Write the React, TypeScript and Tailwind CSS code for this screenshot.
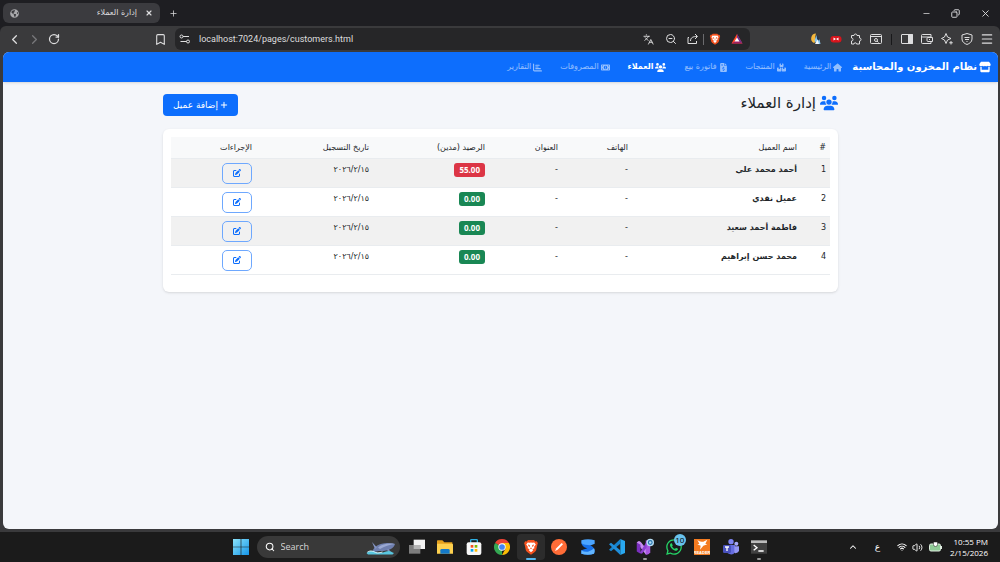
import type { ComponentType, ReactNode } from 'react'
import clsx from 'clsx'
import {
  Bookmark,
  ChevronLeft,
  ChevronRight,
  ChevronUp,
  Copy,
  Languages,
  Menu,
  Minus,
  Plus,
  RotateCw,
  Search,
  Volume2,
  Wifi,
  X,
  ZoomOut,
} from 'lucide-react'
import { FaGlobeAmericas, FaWhatsapp } from 'react-icons/fa'
import {
  FaBoxesStacked,
  FaChartBar,
  FaFileInvoiceDollar,
  FaHouse,
  FaMoneyBill1,
  FaPenToSquare,
  FaPlus,
  FaStore,
  FaUsers,
} from 'react-icons/fa6'

interface NavItem {
  label: string
  icon: ComponentType<{ className?: string }>
  active?: boolean
}

interface Customer {
  id: number
  name: string
  balance: number
  date: string
}

const NAV: NavItem[] = [
  { label: 'الرئيسية', icon: FaHouse },
  { label: 'المنتجات', icon: FaBoxesStacked },
  { label: 'فاتورة بيع', icon: FaFileInvoiceDollar },
  { label: 'العملاء', icon: FaUsers, active: true },
  { label: 'المصروفات', icon: FaMoneyBill1 },
  { label: 'التقارير', icon: FaChartBar },
]

const CUSTOMERS: Customer[] = [
  { id: 1, name: 'أحمد محمد علي', balance: 55, date: '٢٠٢٦/٢/١٥' },
  { id: 2, name: 'عميل نقدي', balance: 0, date: '٢٠٢٦/٢/١٥' },
  { id: 3, name: 'فاطمة أحمد سعيد', balance: 0, date: '٢٠٢٦/٢/١٥' },
  { id: 4, name: 'محمد حسن إبراهيم', balance: 0, date: '٢٠٢٦/٢/١٥' },
]

const COLUMNS = [
  { label: '#', width: 'w-[29px]' },
  { label: 'اسم العميل', width: 'w-[169px]' },
  { label: 'الهاتف', width: 'w-[70px]' },
  { label: 'العنوان', width: 'w-[73px]' },
  { label: 'الرصيد (مدين)', width: 'w-[116px]' },
  { label: 'تاريخ التسجيل', width: 'w-[117px]' },
  { label: 'الإجراءات', width: 'w-auto' },
]

function BraveLogo({ className }: { className?: string }) {
  return (
    <svg viewBox="0 0 24 24" className={className} aria-hidden="true">
      <path d="M7.5 1.5h9l2 2.2 2.3-.4 1.5 3-.7 1.9-1.8 8.3c-.5 1.7-1.4 2.6-2.7 3.5L12 23.5 6.9 20c-1.3-.9-2.2-1.8-2.7-3.5L2.4 8.2l-.7-1.9 1.5-3 2.3.4z" fill="#f4511e" />
      <path d="m12 5.2 2 .5 2.800-.6 2.400 3.200-2.500 3.400.4 2-3 1.800 1.200 1.500L12 20l-3.300-3 1.200-1.500-3-1.800.4-2-2.500-3.400 2.400-3.200 2.800.6z" fill="#fff" />
      <path d="m7.200 8.200 2.800.7.6 3-2-.9zm9.600 0-2.800.7-.6 3 2-.9zM12 12.600l1.400 1.200-1.400 1.400-1.400-1.400z" fill="#f4511e" />
    </svg>
  )
}

function ToolButton({ label, children }: { label: string; children: ReactNode }) {
  return (
    <button type="button" aria-label={label} className="flex h-5 w-5 items-center justify-center">
      {children}
    </button>
  )
}

function ExtensionIcons() {
  return (
    <>
      <ToolButton label="Weather extension">
        <svg viewBox="0 0 24 24" className="size-3">
          <path d="M12 1A10 10 0 0 0 8 20C12 20 9 8 12 1z" fill="#f5b83d" />
          <path d="M13 4 9 15l4 7h8l-2-9-3 2z" fill="#87c5ee" />
          <path d="m15 13 3 9h-8z" fill="#f4f7fa" />
          <path d="m13 4 4 5 1 6-4-3z" fill="#24344c" />
        </svg>
      </ToolButton>
      <ToolButton label="Video extension">
        <svg viewBox="0 0 24 24" className="size-3">
          <rect x="1" y="6" width="22" height="13" rx="6" fill="#d8141c" />
          <path d="m7 9 5 3-5 3zm10 0-5 3 5 3z" fill="#fff" />
        </svg>
      </ToolButton>
      <ToolButton label="Extensions">
        <svg viewBox="0 0 24 24" className="size-3" fill="none" stroke="currentColor" strokeWidth="2" strokeLinejoin="round">
          <path d="M3 5h5a3 3 0 1 1 6 0h5v5a3 3 0 1 1 0 6v6h-6a2.500 2.500 0 0 0-5 0H3v-6a3 3 0 0 0 0-6z" />
        </svg>
      </ToolButton>
      <ToolButton label="Search tabs">
        <svg viewBox="0 0 24 24" className="size-3" fill="none" stroke="currentColor" strokeWidth="2">
          <rect x="1" y="3" width="22" height="18" rx="2" />
          <path d="M1 7h22M14 16l3 3" />
          <circle cx="12" cy="14" r="3" />
        </svg>
      </ToolButton>
    </>
  )
}

function TitleBar() {
  return (
    <div className="flex h-[26px] items-center bg-[#1e1e22] pl-[3px] text-[#dcdcde]">
      <div className="flex h-5 w-[157px] items-center gap-2 rounded-md bg-[#3b3b3f] px-[7px]">
        <FaGlobeAmericas className="size-[9px] text-[#a9a9ac]" />
        <span dir="rtl" className="flex-1 font-['DejaVu_Sans',sans-serif] text-[8px]">إدارة العملاء</span>
        <button type="button" aria-label="Close tab"><X className="size-2" strokeWidth={3.5} /></button>
      </div>
      <button type="button" aria-label="New tab" className="ml-2 p-px"><Plus className="size-[9px]" strokeWidth={2} /></button>
      <div className="ml-auto flex items-center gap-5 pr-[9px]">
        <button type="button" aria-label="Minimize"><Minus className="size-[9px]" /></button>
        <button type="button" aria-label="Restore"><Copy className="size-[9px] -scale-x-100" strokeWidth={2.5} /></button>
        <button type="button" aria-label="Close"><X className="size-[11px]" /></button>
      </div>
    </div>
  )
}

function Toolbar() {
  return (
    <div className="flex h-[26px] items-center rounded-t-md bg-[#3a3a3c] pl-1 pr-[3px] text-[#dededf]">
      <ToolButton label="Back"><ChevronLeft className="size-[15px]" /></ToolButton>
      <ToolButton label="Forward"><ChevronRight className="size-[15px] text-[#78787b]" /></ToolButton>
      <ToolButton label="Reload"><RotateCw className="size-3" strokeWidth={2.5} /></ToolButton>
      <div className="ml-auto flex w-[600px] items-center gap-[5px]">
        <ToolButton label="Bookmark"><Bookmark className="size-[13px]" /></ToolButton>
        <div className="flex h-[22px] flex-1 items-center rounded-md bg-[#262628] pl-1 pr-[3px]">
          <svg viewBox="0 0 24 24" className="size-3" fill="none" stroke="currentColor" strokeWidth="2">
            <circle cx="5" cy="7" r="3" />
            <circle cx="18" cy="17" r="3" />
            <path d="M8 7h12M3 17h12" />
          </svg>
          <input
            aria-label="Address"
            defaultValue="localhost:7024/pages/customers.html"
            className="ml-2 mt-0.5 min-w-0 flex-1 bg-transparent font-['Roboto',sans-serif] text-[9px] outline-none"
          />
          <ToolButton label="Translate"><Languages className="size-[11px]" /></ToolButton>
          <span className="w-[3px]" />
          <ToolButton label="Zoom"><ZoomOut className="size-3" /></ToolButton>
          <span className="w-0.5" />
          <ToolButton label="Share">
            <svg viewBox="0 0 24 24" className="size-3" fill="none" stroke="currentColor" strokeWidth="2">
              <path d="M4 9H2v12h17v-5M7 16c0-7 5-9 13-9M16 2l5 5-5 5" />
            </svg>
          </ToolButton>
          <span className="h-[11px] w-px bg-[#6b6b6e]" />
          <span className="w-px" />
          <ToolButton label="Shields"><BraveLogo className="size-3" /></ToolButton>
          <span className="w-0.5" />
          <ToolButton label="Rewards">
            <svg viewBox="0 0 24 24" className="size-3">
              <path d="M12 2 1 21h22z" fill="#ff4724" />
              <path d="m1 21 11-7 11 7z" fill="#9e1f63" />
              <path d="m12 2 11 19-11-7z" fill="#662d91" />
              <path d="m12 9 5 8H7z" fill="#fff" />
            </svg>
          </ToolButton>
        </div>
      </div>
      <div className="ml-14 flex items-center">
        <ExtensionIcons />
        <span className="mx-[5px] h-[11px] w-px bg-[#18181a]" />
        <ToolButton label="Sidebar">
          <svg viewBox="0 0 24 24" className="size-3" fill="none" stroke="currentColor" strokeWidth="2">
            <rect x="1" y="3" width="22" height="18" rx="1" />
            <path d="M15 3h8v18h-8z" fill="currentColor" />
          </svg>
        </ToolButton>
        <ToolButton label="Wallet">
          <svg viewBox="0 0 24 24" className="size-3" fill="none" stroke="currentColor" strokeWidth="2" strokeLinejoin="round">
            <path d="M20 8V3H3a2 2 0 0 0-2 2v14q0 2 2 2h17v-4M1 6q0 2 2 2h17M14 9h9v8h-9q-2 0-2-2v-4q0-2 2-2zM16 13h2" />
          </svg>
        </ToolButton>
        <ToolButton label="Assistant">
          <svg viewBox="0 0 24 24" className="size-3" fill="none" stroke="currentColor" strokeWidth="2" strokeLinejoin="round">
            <path d="m10 1 3 7 7 3-7 3-3 7-3-7-6-3 6-3zM20 16v7M16.500 19.500h7" />
          </svg>
        </ToolButton>
        <ToolButton label="VPN">
          <svg viewBox="0 0 24 24" className="size-3" fill="none" stroke="currentColor" strokeWidth="2">
            <path d="M12 1 2 4v8c0 6 5 9 10 11 5-2 10-5 10-11V4z" />
            <path d="M7 9h10M8 13h8M11 17h2" />
          </svg>
        </ToolButton>
        <ToolButton label="Menu"><Menu className="size-[14px]" /></ToolButton>
      </div>
    </div>
  )
}

function SiteNav() {
  return (
    <nav className="flex h-[30px] items-center bg-[#0d6efd] px-[7px] text-white shadow-sm">
      <a href="#home" className="flex items-center gap-0.5 text-[10px] font-bold">
        <FaStore className="size-3" />
        نظام المخزون والمحاسبة
      </a>
      <div className="flex items-center gap-[18px] pr-[10px]">
        {NAV.map((item) => (
          <a
            key={item.label}
            href="#nav"
            className={clsx('flex items-center gap-0.5 text-[8px]', item.active ? 'font-bold text-white' : 'text-white/55')}
          >
            <item.icon className={item.active ? 'size-[11px]' : 'size-[9px]'} />
            {item.label}
          </a>
        ))}
      </div>
    </nav>
  )
}

function CustomersTable() {
  return (
    <table className="w-full table-fixed border-collapse text-right text-[8px] text-[#212529]">
      <thead>
        <tr className="h-[21px] border-b border-[#e9ecef] bg-[#f8f9fa]">
          {COLUMNS.map((col) => (
            <th key={col.label} scope="col" className={clsx('px-1 pt-0.5 font-normal', col.width)}>
              {col.label}
            </th>
          ))}
        </tr>
      </thead>
      <tbody>
        {CUSTOMERS.map((c) => (
          <tr key={c.id} className="border-b border-[#e9ecef] align-top odd:bg-[#f1f1f1]">
            <td className="px-1 pt-[5px]">{c.id}</td>
            <td className="px-1 pt-[5px] font-bold">{c.name}</td>
            <td className="px-1 pt-[5px]">-</td>
            <td className="px-1 pt-[5px]">-</td>
            <td className="px-1 pt-1">
              <span
                className={clsx(
                  'inline-block rounded-[3px] px-[5px] py-px font-["Noto_Sans",sans-serif] font-bold leading-3 text-white',
                  c.balance > 0 ? 'bg-[#dc3545]' : 'bg-[#198754]'
                )}
              >
                {c.balance.toFixed(2)}
              </span>
            </td>
            <td className="px-1 pt-[5px]">{c.date}</td>
            <td className="px-1 pb-[3px] pt-1">
              <button
                type="button"
                aria-label={`تعديل ${c.name}`}
                className="flex h-[21px] w-[30px] items-center justify-center rounded-[5px] border border-[#6ea8fe] text-[#0d6efd]"
              >
                <FaPenToSquare className="size-2" />
              </button>
            </td>
          </tr>
        ))}
      </tbody>
    </table>
  )
}

function CustomersPage() {
  return (
    <div dir="rtl" lang="ar" className="ml-[3px] mr-[2px] flex-1 overflow-hidden rounded-md bg-[#f4f6fa] font-['DejaVu_Sans',sans-serif] leading-3">
      <SiteNav />
      <main className="mx-auto max-w-[675px] pt-3">
        <div className="mb-[13px] flex items-center justify-between">
          <h1 className="flex items-center gap-1 pb-1 text-[15px] leading-[18px] text-[#212529]">
            <FaUsers className="size-[18px] text-[#0d6efd]" />
            إدارة العملاء
          </h1>
          <button type="button" className="flex h-[22px] items-center gap-0.5 rounded bg-[#0d6efd] px-[10px] text-[9px] text-white">
            <FaPlus className="size-2" />
            إضافة عميل
          </button>
        </div>
        <section className="rounded-md bg-white px-2 pb-[17px] pt-2 shadow-sm">
          <CustomersTable />
        </section>
      </main>
    </div>
  )
}

interface AppIconProps {
  label: string
  current?: boolean
  running?: boolean
  children: ReactNode
}

function AppIcon({ label, current, running, children }: AppIconProps) {
  return (
    <button
      type="button"
      aria-label={label}
      className={clsx('relative flex h-[26px] w-7 items-center justify-center rounded-sm', current && 'bg-[#2c2c2c]')}
    >
      {children}
      {(current || running) && (
        <span className={clsx('absolute bottom-0 h-0.5 rounded-full', current ? 'w-2.5 bg-[#55b8f0]' : 'w-1 bg-[#9a9a9a]')} />
      )}
    </button>
  )
}

function PinnedApps() {
  return (
    <div className="ml-[3px] flex w-[371px] items-center justify-between">
      <AppIcon label="Task view">
        <svg viewBox="0 0 24 24" className="size-4">
          <path d="M7 1h17v14H7z" fill="#f2f2f2" />
          <path d="M0 9h17v13H0z" fill="#7d7d7d" />
          <path d="M7 9h10v6H7z" fill="#b5b5b5" />
        </svg>
      </AppIcon>
      <AppIcon label="File Explorer">
        <svg viewBox="0 0 24 24" className="size-4">
          <path d="M0 3q0-1 1-1h7l3 3h12v6H0z" fill="#e5a11d" />
          <path d="M0 7h23q1 0 1 1v14H0z" fill="#fdd04f" />
          <path d="M5 22v-5q0-2 2-2h10q2 0 2 2v5z" fill="#1479c9" />
        </svg>
      </AppIcon>
      <AppIcon label="Microsoft Store">
        <svg viewBox="0 0 24 24" className="size-4">
          <path d="M7 6V2q0-1 1-1h8q1 0 1 1v4" fill="none" stroke="#2fb1e4" strokeWidth="2" />
          <rect x="1" y="5" width="22" height="19" rx="3" fill="#f7f7f7" />
          <path d="M7 9h4v4H7z" fill="#f25022" />
          <path d="M13 9h4v4h-4z" fill="#7fba00" />
          <path d="M7 15h4v4H7z" fill="#00a4ef" />
          <path d="M13 15h4v4h-4z" fill="#ffb900" />
        </svg>
      </AppIcon>
      <AppIcon label="Chrome">
        <svg viewBox="0 0 24 24" className="size-4">
          <path d="M12 12 1.600 6A12 12 0 0 1 22.400 6z" fill="#ea4335" />
          <path d="M12 12v12A12 12 0 0 1 1.600 6z" fill="#34a853" />
          <path d="M12 6h10.400A12 12 0 0 1 12 24l5-9z" fill="#fbbc05" />
          <circle cx="12" cy="12" r="5.500" fill="#fff" />
          <circle cx="12" cy="12" r="4.300" fill="#4285f4" />
        </svg>
      </AppIcon>
      <AppIcon label="Brave" current><BraveLogo className="size-4" /></AppIcon>
      <AppIcon label="Postman">
        <svg viewBox="0 0 24 24" className="size-4">
          <circle cx="12" cy="12" r="12" fill="#ff6c37" />
          <path d="m6 18 2-4 8-8 2 2-8 8z" fill="#fff" />
        </svg>
      </AppIcon>
      <AppIcon label="Database client">
        <svg viewBox="0 0 24 24" className="size-4">
          <path d="M2 2q10-3 20 0v5l-9 4q-9 0-11-5z" fill="#4ba5ff" />
          <path d="M2 5q1 4 10 4 9 1 10 9l-1 4q-9 3-19 0v-5l9-3Q2 12 2 5z" fill="#1670e8" />
          <path d="M2 17q5 3 10 2t9-5q2 3 0 8-9 3-19 0z" fill="#62b5ff" />
        </svg>
      </AppIcon>
      <AppIcon label="Visual Studio Code">
        <svg viewBox="0 0 24 24" className="size-4">
          <path d="m17 0 7 3v18l-7 3z" fill="#29a8ef" />
          <path d="M17 0v7L3 18.500l-3-2.500z" fill="#1683cd" />
          <path d="M17 24v-7L3 5.500 0 8z" fill="#208fdb" />
        </svg>
      </AppIcon>
      <AppIcon label="Visual Studio" running>
        <svg viewBox="0 0 24 24" className="size-[18px]">
          <path d="M1 6q3-4 6 0l11 14-5 2z" fill="#c78bf1" />
          <path d="M1 6v12l5 3V9z" fill="#7b2fbf" />
          <path d="m13 3 6 1v15q-2 4-6 3z" fill="#a857e0" />
          <path d="M5 20 14 5v8l-6 8z" fill="#8b3fd0" />
          <circle cx="19" cy="6" r="5" fill="#b6dcf3" />
          <circle cx="19" cy="6" r="2.500" fill="none" stroke="#2573ad" strokeWidth="1.500" />
        </svg>
      </AppIcon>
      <AppIcon label="WhatsApp">
        <FaWhatsapp className="size-[18px] text-[#25d366]" />
        <span className="absolute right-0.5 top-0 flex size-3 items-center justify-center rounded-full bg-[#69c3ee] font-['Open_Sans',sans-serif] text-[8px] leading-none text-black">
          10
        </span>
      </AppIcon>
      <AppIcon label="PDF Reader">
        <svg viewBox="0 0 24 24" className="size-4">
          <path d="M0 0h24v24H0z" fill="#f47b20" />
          <path d="M5 1c3 3 6 3 9 3l6-3-3 6 3 1-6 2-5 6 1-6-5-2 3-1z" fill="#fff" />
          <text x="12" y="23" textAnchor="middle" fill="#fff" className="font-['Liberation_Sans',sans-serif] text-[6px] font-bold">READER</text>
        </svg>
      </AppIcon>
      <AppIcon label="Teams">
        <svg viewBox="0 0 24 24" className="size-4">
          <circle cx="12" cy="4" r="4" fill="#7f85f5" />
          <circle cx="20" cy="7" r="3" fill="#a7a8fb" />
          <path d="M6 9h12v10q-2 5-7 4t-5-5z" fill="#666de0" />
          <path d="M17 11h7v7q-2 4-7 3z" fill="#9496f5" />
          <rect x="0" y="9" width="12" height="12" rx="2" fill="#4951bd" />
          <path d="M3 12h6M6 12v6" stroke="#fff" strokeWidth="2" />
        </svg>
      </AppIcon>
      <AppIcon label="Terminal" running>
        <svg viewBox="0 0 24 24" className="size-4">
          <path d="M0 3h24v19H0z" fill="#414141" />
          <path d="M0 2h24v4H0z" fill="#bcbcbc" />
          <path d="m4 9 5 4-5 4M11 18h8" fill="none" stroke="#fff" strokeWidth="2" />
        </svg>
      </AppIcon>
    </div>
  )
}

function Taskbar() {
  return (
    <footer className="grid h-[30px] grid-cols-[1fr_auto_1fr] items-center bg-[#1b1b1b] text-white">
      <span />
      <div className="flex items-center">
        <AppIcon label="Start">
          <svg viewBox="0 0 24 24" className="size-4">
            <defs>
              <linearGradient id="win" x1="0" y1="0" x2="1" y2="1">
                <stop offset="0" stopColor="#8be4fb" />
                <stop offset="1" stopColor="#1595e8" />
              </linearGradient>
            </defs>
            <path d="M0 0h11.500v11.500H0zM12.500 0H24v11.500H12.500zM0 12.500h11.500V24H0zM12.500 12.500H24V24H12.500z" fill="url(#win)" />
          </svg>
        </AppIcon>
        <div className="ml-0.5 flex h-[22px] w-[143px] items-center rounded-full bg-[#393939] pl-2 pr-1">
          <Search className="size-[10px]" strokeWidth={2.5} />
          <input
            aria-label="Search"
            placeholder="Search"
            className="ml-1.5 min-w-0 flex-1 bg-transparent font-['Open_Sans',sans-serif] text-[9px] outline-none placeholder:text-[#d6d6d6]"
          />
          <svg viewBox="0 0 60 32" className="h-4 w-[30px]" aria-hidden="true">
            <path d="M12 27C16 12 34 4 58 10c-2 10-16 15-32 14z" fill="#6f7fae" />
            <path d="M24 17c10-8 22-9 34-7-8 1-20 4-30 10z" fill="#9aa8d2" />
            <path d="m18 20-6-14 10 11zM45 20l6 8-10-6z" fill="#8393c2" />
            <path d="M1 28c7-5 12-5 18-2s14 2 21-1 11 1 16 3l-3 3H4z" fill="#59c6df" />
            <path d="M3 26c7-4 12-1 16 1s10 0 14-1" fill="none" stroke="#d8f6fc" strokeWidth="2" />
          </svg>
        </div>
        <PinnedApps />
      </div>
      <div className="flex items-center justify-end pr-3">
        <ChevronUp className="mr-[17px] size-[10px]" strokeWidth={2.5} />
        <span className="mr-[17px] font-['DejaVu_Sans',sans-serif] text-[9px] leading-3">ع</span>
        <Wifi className="mr-[5px] size-[10px]" strokeWidth={2.5} />
        <Volume2 className="mr-1.5 size-[11px]" />
        <svg viewBox="0 0 26 20" className="mr-2 h-[10px] w-[13px]" aria-label="Battery" role="img">
          <rect x="1" y="4" width="22" height="14" rx="3" fill="#8fca96" stroke="#dfeee0" strokeWidth="2" />
          <path d="M24 8h2v6h-2z" fill="#dfeee0" />
          <path d="M9 0v5q0 4 4 4t4-4V0z" fill="#fff" stroke="#1b1b1b" />
        </svg>
        <time className="text-right font-['Open_Sans',sans-serif] text-[8px] leading-[11px]">
          <span className="block">10:55 PM</span>
          <span className="block">2/15/2026</span>
        </time>
      </div>
    </footer>
  )
}

export default function App() {
  return (
    <div className="flex min-h-screen flex-col bg-[#1e1e22]">
      <TitleBar />
      <div className="flex flex-1 flex-col bg-[#3a3a3c] pb-[3px]">
        <div className="bg-[#1e1e22]"><Toolbar /></div>
        <CustomersPage />
      </div>
      <Taskbar />
    </div>
  )
}
